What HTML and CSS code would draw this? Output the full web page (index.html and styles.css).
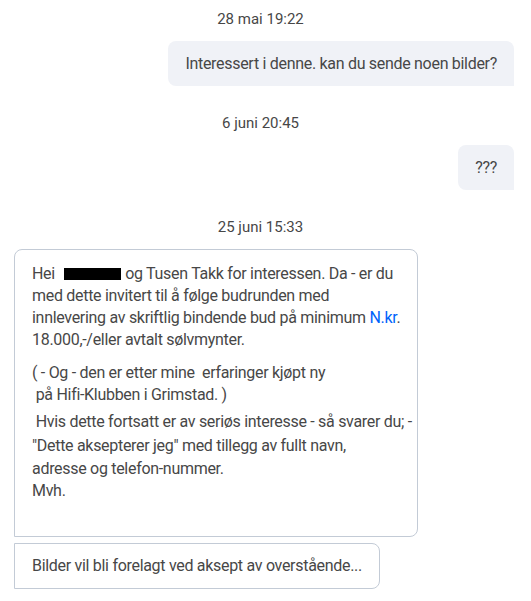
FILE: index.html
```html
<!DOCTYPE html>
<html lang="no">
<head>
  <meta charset="UTF-8" />
  <meta name="viewport" content="width=device-width, initial-scale=1.0" />
  <title>Meldinger</title>
  <link rel="stylesheet" href="styles.css">
</head>
<body>
  <div class="thread">
    <div class="stamp">28 mai 19:22</div>
    <div class="row row-out">
      <div class="msg msg-out">Interessert i denne. kan du sende noen bilder?</div>
    </div>

    <div class="stamp">6 juni 20:45</div>
    <div class="row row-out">
      <div class="msg msg-out">???</div>
    </div>

    <div class="stamp">25 juni 15:33</div>
    <div class="group">
      <div class="msg msg-in msg-first msg-long">
        <p class="p1">Hei <span class="redact"></span> og Tusen Takk for interessen. Da - er du<br>med dette invitert til å følge budrunden med<br>innlevering av skriftlig bindende bud på minimum <a href="#">N.kr</a>.<br>18.000,-/eller avtalt sølvmynter.</p>
        <p class="p2">( - Og - den er etter mine &nbsp;erfaringer kjøpt ny<br>&nbsp;på Hifi-Klubben i Grimstad. )</p>
        <p class="p3">&nbsp;Hvis dette fortsatt er av seriøs interesse - så svarer du; -</p>
        <p class="p4">"Dette aksepterer jeg" med tillegg av fullt navn,<br>adresse og telefon-nummer.<br>Mvh.<br>&nbsp;</p>
      </div>
      <div class="msg msg-in msg-last">Bilder vil bli forelagt ved aksept av overstående...</div>
    </div>
  </div>
</body>
</html>
```
FILE: styles.css
```css
* { box-sizing: border-box; }
body {
  margin: 0;
  font-family: Roboto, "Liberation Sans", sans-serif;
  color: #474747;
  background: #fff;
}
.thread {
  width: 500px;
  margin-left: 14px;
  display: flex;
  flex-direction: column;
}
.stamp {
  font-size: 15px; line-height: 20px;
  text-align: center; padding-right: 7px;
  margin: 27px 0 12px;
}
.stamp:first-child { margin-top: 9px; }
.row { display: flex; }
.row-out { justify-content: flex-end; }
.msg {
  font-size: 16px; letter-spacing: -0.3px;
  line-height: 23px;
  padding: 11px 17px;
  border-radius: 8px;
  white-space: nowrap;
}
.msg-out {
  background: #f0f2f7;
  border-bottom-right-radius: 0;
}
.group { display: flex; flex-direction: column; align-items: flex-start; gap: 6px; }
.msg-in {
  background: #fff;
  border: 1px solid #c3cbd6;
  line-height: 22px;
}
.msg-first { border-bottom-left-radius: 0; }
.msg-last { border-top-left-radius: 0; border-bottom-left-radius: 0; }
.msg-long { width: 404px; padding: 13px 17px 11px; }
.msg-long p { margin: 0; }
.msg-long .p2 { margin-top: 11px; }
.msg-long .p3 { margin-top: 5px; }
.msg-long .p4 { margin-top: 2px; line-height: 22.6px; }
.msg a { color: #0063fb; text-decoration: none; }
.redact {
  display: inline-block; width: 57px; height: 12px;
  background: #000; margin: 0 1px 0 5px;
  vertical-align: -1px;
}
```
